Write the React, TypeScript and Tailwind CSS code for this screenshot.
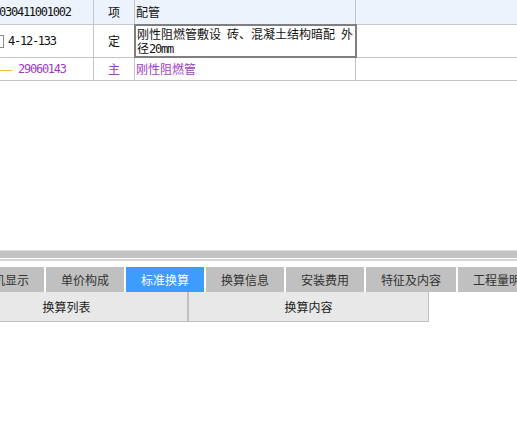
import React from 'react';

const cjk = { fontFamily: '"Noto Sans CJK SC", "Noto Sans", sans-serif' };
const mono = { fontFamily: '"DejaVu Sans Mono", "Noto Sans CJK SC", monospace' };

function Half({ children, className = '' }: { children: React.ReactNode; className?: string }) {
  return (
    <span className={`text-[12px] tracking-[-1.25px] ${className}`} style={mono}>
      {children}
    </span>
  );
}

const tabs = [
  { label: '工料机显示', w: 'w-[90px] ml-[-46px]' },
  { label: '单价构成', w: 'w-[78px]' },
  { label: '标准换算', w: 'w-[78px]', active: true },
  { label: '换算信息', w: 'w-[78px]' },
  { label: '安装费用', w: 'w-[78px]' },
  { label: '特征及内容', w: 'w-[90px]' },
  { label: '工程量明细', w: 'w-[90px]' },
];

export default function App() {
  return (
    <div className="w-[517px] h-[423px] bg-white overflow-hidden text-[12px] text-[#111]" style={cjk}>
      {/* grid */}
      <div className="flex flex-col">
        {/* row 1 */}
        <div className="flex h-[25px] bg-[#edf3fc] border-b border-[#c6c9ce]">
          <div className="w-[94px] shrink-0 border-r border-[#c4c4c4] flex items-center overflow-hidden">
            <Half className="ml-[-1px] text-[#111]">030411001002</Half>
          </div>
          <div className="w-[41px] shrink-0 border-r border-[#c4c4c4] flex items-center justify-center">项</div>
          <div className="w-[221px] shrink-0 border-r border-[#c4c4c4] flex items-center pl-[1px]">配管</div>
          <div className="flex-1" />
        </div>
        {/* row 2 */}
        <div className="flex h-[33px] border-b border-[#c4c4c4]">
          <div className="w-[94px] shrink-0 border-r border-[#c4c4c4] flex items-center overflow-hidden">
            <div className="w-[9px] h-[13px] ml-[-5px] border border-[#8a8a8a] bg-white shrink-0" />
            <Half className="ml-[4px]">4-12-133</Half>
          </div>
          <div className="w-[41px] shrink-0 border-r border-[#c4c4c4] flex items-center justify-center">定</div>
          <div className="w-[221px] shrink-0 border-r border-[#c4c4c4] relative">
            <div className="absolute left-[-1px] top-[-1px] right-[-2px] bottom-[-1px] border-2 border-[#7f7f7f] pl-[1px] pt-[1px] whitespace-nowrap overflow-hidden flex flex-col">
              <div className="h-[14px] leading-[14px]">
                刚性阻燃管敷设<Half> </Half>砖、混凝土结构暗配<Half> </Half>外
              </div>
              <div className="h-[13px] leading-[13px]">
                径<Half className="text-[11px] tracking-[-0.8px]">20mm</Half>
              </div>
            </div>
          </div>
          <div className="flex-1" />
        </div>
        {/* row 3 */}
        <div className="flex h-[23px] border-b border-[#c4c4c4] text-[#a03cc6]">
          <div className="w-[94px] shrink-0 border-r border-[#c4c4c4] flex items-center overflow-hidden">
            <div className="w-[12px] h-[1px] mt-[2px] bg-[#f5bf3c] shrink-0" />
            <Half className="ml-[6px]">29060143</Half>
          </div>
          <div className="w-[41px] shrink-0 border-r border-[#c4c4c4] flex items-center justify-center">主</div>
          <div className="w-[221px] shrink-0 border-r border-[#c4c4c4] flex items-center pl-[1px]">刚性阻燃管</div>
          <div className="flex-1" />
        </div>
      </div>

      {/* empty area */}
      <div className="h-[169px]" />

      {/* splitter */}
      <div className="h-[1px] bg-[#dcdcdc]" />
      <div className="h-[7px] bg-[#c3c3c3]" />
      <div className="h-[1px] bg-white" />
      <div className="h-[2px] bg-[#d6d6d6]" />
      <div className="h-[6px] bg-white" />

      {/* tabs */}
      <div className="flex gap-[2px] h-[25px] whitespace-nowrap">
        {tabs.map((t) => (
          <div
            key={t.label}
            className={`${t.w} shrink-0 flex items-center justify-center text-[12px] ${
              t.active ? 'bg-[#3f9cff] text-white' : 'bg-[#c0c0c0] text-[#333]'
            }`}
          >
            {t.label}
          </div>
        ))}
      </div>

      {/* sub header */}
      <div className="flex h-[30px]">
        <div className="w-[243px] ml-[-54px] shrink-0 bg-[#e8e8e8] border-b border-r-2 border-[#c0c0c0] flex items-center justify-center text-[#222]">
          换算列表
        </div>
        <div className="w-[240px] shrink-0 bg-[#e8e8e8] border-b border-r border-[#c0c0c0] flex items-center justify-center text-[#222]">
          换算内容
        </div>
      </div>
    </div>
  );
}
